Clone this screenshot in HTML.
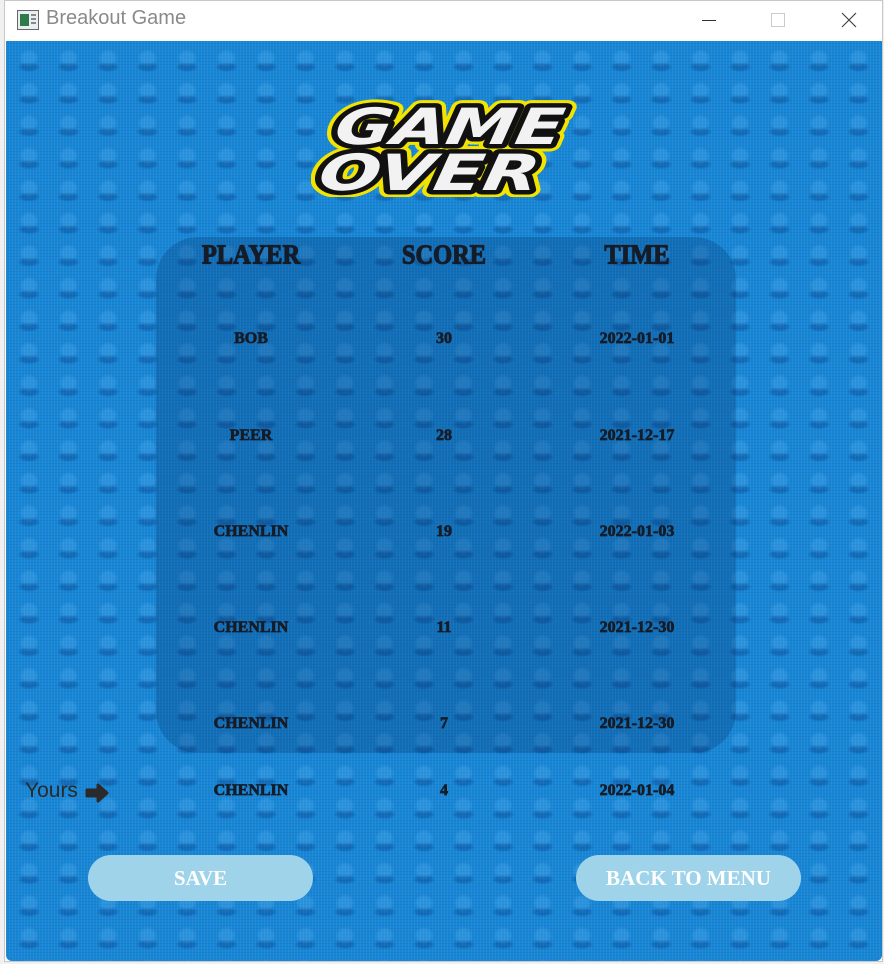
<!DOCTYPE html>
<html><head><style>
html,body{margin:0;padding:0;width:884px;height:964px;overflow:hidden;background:#f0f0f0;font-family:"Liberation Sans",sans-serif}
.win{position:absolute;left:4px;top:0;width:879px;height:962px;background:#fff;border:1px solid #c8c8c8;box-sizing:border-box}
.title{position:absolute;left:0;top:0;width:100%;height:40px;background:#fff}
.title .t{position:absolute;left:41px;top:6px;font-size:20px;color:#8a8a8a}
.client{position:absolute;left:1px;top:40px;width:876px;height:920px;border-radius:0 0 6px 6px;overflow:hidden;
background-color:#1786d6;
background-image:
radial-gradient(ellipse 10px 9px at 20px 15px,rgba(110,190,250,.22) 0 60%,transparent 100%),
radial-gradient(ellipse 12px 5px at 20px 24px,rgba(0,40,110,.28) 0 55%,transparent 100%),
repeating-linear-gradient(90deg,rgba(255,255,255,.06) 0 1px,transparent 1px 3px),
repeating-linear-gradient(0deg,rgba(0,0,0,.05) 0 1px,transparent 1px 3px);
background-size:39.5px 32.5px,39.5px 32.5px,3px 3px,3px 3px;background-position:3px 2px,3px 2px,0 0,0 0}
.panel{position:absolute;left:150px;top:196px;width:580px;height:516px;border-radius:42px;background:rgba(0,30,80,.22)}
.c{position:absolute;font-family:"Liberation Serif",serif;font-weight:bold;color:#151c28;text-align:center;white-space:nowrap;transform:translateX(-50%);-webkit-text-stroke:.7px #151c28}
.h{font-size:26px;transform:translateX(-50%) scaleX(.94) scaleY(1.05);-webkit-text-stroke:1.1px #151c28}
.r{font-size:16px}
.btn{position:absolute;top:814px;width:225px;height:46px;border-radius:23px;background:#9fd3ea;color:#fff;font-family:"Liberation Serif",serif;font-weight:bold;font-size:21px;text-align:center;line-height:46px}
</style></head><body>
<div class="win">
<div class="title">
<svg style="position:absolute;left:12px;top:9px" width="22" height="20"><rect x="0.5" y="0.5" width="21" height="19" fill="#e8eef2" stroke="#666"/><rect x="3" y="4" width="9" height="12" fill="#2f7a4a"/><rect x="14" y="4" width="5" height="2" fill="#888"/><rect x="14" y="8" width="5" height="2" fill="#888"/><rect x="14" y="12" width="5" height="2" fill="#888"/></svg>
<div class="t">Breakout Game</div>
<div style="position:absolute;left:697px;top:19px;width:14px;height:1px;background:#333"></div>
<div style="position:absolute;left:766px;top:12px;width:12px;height:12px;border:1px solid #ccc"></div>
<svg style="position:absolute;left:836px;top:11px" width="16" height="16"><path d="M1 1L15 15M15 1L1 15" stroke="#444" stroke-width="1.2"/></svg>
</div>
<div class="client">
<svg style="position:absolute;left:305px;top:56px" width="275" height="100">
<g font-family="DejaVu Sans" font-weight="bold" font-style="italic" font-size="50" transform="skewX(-10)">
<g fill="#f2e400" stroke="#f2e400" stroke-width="15" stroke-linejoin="round">
<text x="30" y="47" textLength="228" lengthAdjust="spacingAndGlyphs">GAME</text>
<text x="22" y="93" textLength="220" lengthAdjust="spacingAndGlyphs">OVER</text></g>
<g fill="#111" stroke="#111" stroke-width="9" stroke-linejoin="round">
<text x="30" y="47" textLength="228" lengthAdjust="spacingAndGlyphs">GAME</text>
<text x="22" y="93" textLength="220" lengthAdjust="spacingAndGlyphs">OVER</text></g>
<g fill="#f2f2f2">
<text x="30" y="47" textLength="228" lengthAdjust="spacingAndGlyphs">GAME</text>
<text x="22" y="93" textLength="220" lengthAdjust="spacingAndGlyphs">OVER</text></g>
</g></svg>
<div class="panel"></div>
<div class="c h" style="left:245px;top:199px">PLAYER</div>
<div class="c h" style="left:438px;top:199px">SCORE</div>
<div class="c h" style="left:631px;top:199px">TIME</div>

<div class="c r" style="left:245px;top:289px">BOB</div><div class="c r" style="left:438px;top:289px">30</div><div class="c r" style="left:631px;top:289px">2022-01-01</div>
<div class="c r" style="left:245px;top:386px">PEER</div><div class="c r" style="left:438px;top:386px">28</div><div class="c r" style="left:631px;top:386px">2021-12-17</div>
<div class="c r" style="left:245px;top:482px">CHENLIN</div><div class="c r" style="left:438px;top:482px">19</div><div class="c r" style="left:631px;top:482px">2022-01-03</div>
<div class="c r" style="left:245px;top:578px">CHENLIN</div><div class="c r" style="left:438px;top:578px">11</div><div class="c r" style="left:631px;top:578px">2021-12-30</div>
<div class="c r" style="left:245px;top:674px">CHENLIN</div><div class="c r" style="left:438px;top:674px">7</div><div class="c r" style="left:631px;top:674px">2021-12-30</div>
<div class="c r" style="left:245px;top:741px">CHENLIN</div><div class="c r" style="left:438px;top:741px">4</div><div class="c r" style="left:631px;top:741px">2022-01-04</div>

<div style="position:absolute;left:19px;top:738px;font-size:21px;color:#2a2a2a">Yours</div>
<svg style="position:absolute;left:78px;top:741px" width="26" height="22"><path d="M3 8h11V3l9 8-9 8v-5H3z" fill="#2a2a2a" stroke="#2a2a2a" stroke-width="3" stroke-linejoin="round"/></svg>

<div class="btn" style="left:82px">SAVE</div>
<div class="btn" style="left:570px">BACK TO MENU</div>
</div>
</div>
</body></html>
